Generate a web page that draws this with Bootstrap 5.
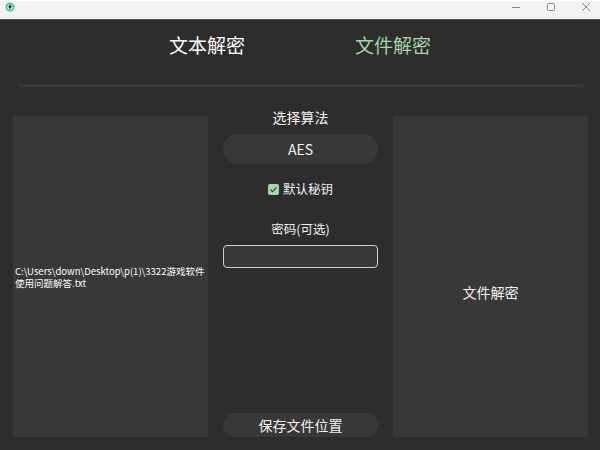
<!DOCTYPE html>
<html lang="zh">
<head>
<meta charset="utf-8">
<title>文件解密</title>
<link href="https://cdn.jsdelivr.net/npm/bootstrap@5.3.0/dist/css/bootstrap.min.css" rel="stylesheet">
<style>
html,body{width:600px;height:450px;overflow:hidden;margin:0;background:#2d2d2d;}
body{font-family:"Noto Sans CJK SC","Noto Sans",sans-serif;color:#f2f2f2;}
.titlebar{height:20px;background:#f3f3f3;border-top:1px solid #fff;border-bottom:1px solid #555;padding:1px 9px 0 5px;}
.winbtns{gap:25px;}
.winbtns svg{display:block;}
.tabsrow{height:64px;padding-bottom:14px;}
.tabsrow span{font-size:19px;line-height:28px;}
.tabone{width:186px;color:#fff;}
.tabtwo{width:186px;color:#a5d6a7;}
.rule{height:3px;background:#383838;margin:0 17px 0 18px;}
.mainrow{height:331px;margin:19px 12px 0 13px;gap:15px;}
.pane{width:195px;height:321px;background:#383838;margin-top:10px;}
.pathtext{font-size:9.5px;line-height:12px;padding:0 2px;width:100%;word-break:break-all;color:#fff;font-family:"Noto Sans CJK SC",sans-serif;}
.centercol{width:155px;height:331px;}
.lbl{font-size:14px;line-height:20px;margin-top:1px;}
.algo{height:30px;border-radius:15px;background:#383838;font-size:14px;margin-top:7px;}
.check{font-size:12.5px;line-height:18px;margin-top:16px;gap:4px;}
.checkbox{width:11px;height:11px;border-radius:2px;background:#a5d6a7;}
.pwdlabel{font-size:12.5px;line-height:18px;margin-top:22px;}
.pwd{height:23px;border:1px solid #d0d0d0;border-radius:4px;background:#383838;margin-top:7px;}
.savebtn{height:24px;border-radius:12px;background:#383838;font-size:14px;}
.righttext{font-size:14px;padding-top:32px;}
</style>
</head>
<body>
<div class="titlebar d-flex align-items-start justify-content-between">
  <svg width="10" height="10" viewBox="0 0 10 10"><circle cx="5" cy="5" r="4.5" fill="#3ecf8e"/><circle cx="5" cy="5" r="2.6" fill="#e8f5e9"/><circle cx="5" cy="4.6" r="1.5" fill="#222"/><rect x="4.5" y="5" width="1" height="2.2" fill="#222"/></svg>
  <div class="winbtns d-flex">
    <svg width="10" height="10" viewBox="0 0 10 10"><path d="M1 5.5H9" stroke="#8a8a8a" stroke-width="1"/></svg>
    <svg width="10" height="10" viewBox="0 0 10 10"><rect x="1.5" y="1.5" width="7" height="7" rx="1" fill="none" stroke="#8a8a8a" stroke-width="1"/></svg>
    <svg width="10" height="10" viewBox="0 0 10 10"><path d="M1 1L9 9M9 1L1 9" stroke="#8a8a8a" stroke-width="1"/></svg>
  </div>
</div>
<div class="tabsrow d-flex justify-content-center align-items-center">
  <span class="tabone text-center">文本解密</span>
  <span class="tabtwo text-center">文件解密</span>
</div>
<div class="rule"></div>
<div class="mainrow d-flex">
  <div class="pane d-flex align-items-center"><div class="pathtext">C:\Users\down\Desktop\p(1)\3322游戏软件使用问题解答.txt</div></div>
  <div class="centercol d-flex flex-column">
    <div class="lbl text-center">选择算法</div>
    <div class="algo d-flex align-items-center justify-content-center">AES</div>
    <div class="check d-flex align-items-center justify-content-center">
      <span class="checkbox d-flex align-items-center justify-content-center"><svg width="9" height="9" viewBox="0 0 9 9"><path d="M1.5 4.5L3.6 6.6L7.5 2.4" fill="none" stroke="#2d4a2e" stroke-width="1.1"/></svg></span>
      <span>默认秘钥</span>
    </div>
    <div class="pwdlabel text-center">密码(可选)</div>
    <div class="pwd"></div>
    <div class="savebtn d-flex align-items-center justify-content-center mt-auto">保存文件位置</div>
  </div>
  <div class="pane righttext d-flex align-items-center justify-content-center">文件解密</div>
</div>
<script src="https://cdn.jsdelivr.net/npm/bootstrap@5.3.0/dist/js/bootstrap.bundle.min.js"></script>
</body>
</html>
